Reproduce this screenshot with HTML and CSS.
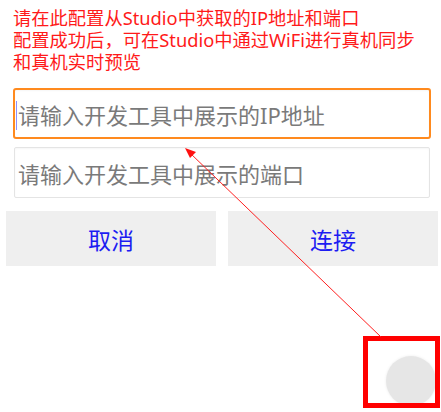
FILE: index.html
```html
<!DOCTYPE html>
<html lang="zh">
<head>
<meta charset="utf-8">
<link rel="stylesheet" href="styles.css">
</head>
<body>
<div class="page">
  <p class="hint">请在此配置从Studio中获取的IP地址和端口<br>配置成功后，可在Studio中通过WiFi进行真机同步和真机实时预览</p>
  <div class="field focused"><span class="caret"></span><span class="ph">请输入开发工具中展示的IP地址</span></div>
  <div class="field"><span class="ph">请输入开发工具中展示的端口</span></div>
  <div class="actions">
    <div class="btn">取消</div>
    <div class="btn">连接</div>
  </div>
</div>
<div class="fab"></div>
<div class="mark"></div>
<svg class="arrow" width="441" height="412" viewBox="0 0 441 412">
  <line x1="381" y1="337" x2="190" y2="153" stroke="#ff2020" stroke-width="1"/>
  <polygon points="185,148 196,152 190,158" fill="#ff1010"/>
</svg>
</body>
</html>
```
FILE: styles.css
```css
html, body { margin: 0; padding: 0; background: #fff; }
body {
  width: 441px; height: 412px; position: relative; overflow: hidden;
  font-family: "Noto Sans", "Noto Sans CJK SC", sans-serif;
}
.page { padding: 7px 3px 0 6px; }
.hint {
  margin: 0 0 0 7px; width: 405px;
  color: #ff1a1a; font-size: 18.3px; line-height: 22px;
}
.field {
  margin: 15px 7px 0 7px; height: 51px; box-sizing: border-box;
  border: 1px solid #e4e4e4; border-radius: 2px;
  display: flex; align-items: center; padding: 3px 0 0 3px;
  color: #7a7a7a; font-size: 22px;
  box-shadow: inset 0 1px 2px rgba(0,0,0,0.04);
}
.field + .field { margin-top: 8px; margin-left: 8px; margin-right: 8px; }
.field.focused { border: 2px solid #ff8a1e; border-radius: 3px; padding-left: 1px; }
.caret { width: 1px; height: 29px; background: #8f8fff; margin-right: 1px; }
.ph { line-height: 30px; }
.actions { display: flex; gap: 12px; margin-top: 13px; }
.btn {
  flex: 1; height: 55px; background: #efefef;
  display: flex; align-items: center; justify-content: center;
  color: #1c1cf2; font-size: 23px;
}
.fab {
  position: absolute; left: 386px; top: 356px; width: 50px; height: 50px;
  border-radius: 50%; background: #e6e6e6;
  box-shadow: 0 0 3px rgba(0,0,0,0.08);
}
.mark {
  position: absolute; left: 363px; top: 336px; width: 77px; height: 72px;
  box-sizing: border-box; border: 5px solid #ff0000;
}
.arrow { position: absolute; left: 0; top: 0; pointer-events: none; }
```
